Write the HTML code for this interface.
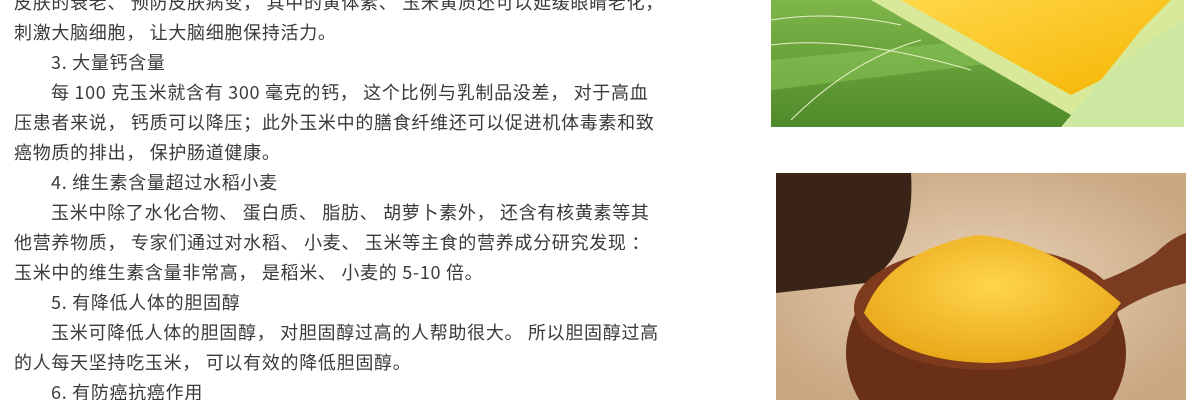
<!DOCTYPE html>
<html><head><meta charset="utf-8"><style>
html,body{margin:0;padding:0;background:#fff;width:1198px;height:400px;overflow:hidden;position:relative}
.t{position:absolute;left:14px;top:-13px;width:740px;height:413px;overflow:hidden;font-family:"Noto Sans CJK SC","Liberation Sans",sans-serif;font-size:18px;letter-spacing:0.7px;line-height:30px;color:#3a3a3a;white-space:nowrap}
.t div{height:30px}
.i{padding-left:37px}
svg{position:absolute}
</style></head><body>
<div class="t">
<div>皮肤的衰老、 预防皮肤病变， 其中的黄体素、 玉米黄质还可以延缓眼睛老化，</div>
<div>刺激大脑细胞， 让大脑细胞保持活力。</div>
<div class="i">3. 大量钙含量</div>
<div class="i">每 100 克玉米就含有 300 毫克的钙， 这个比例与乳制品没差， 对于高血</div>
<div>压患者来说， 钙质可以降压；此外玉米中的膳食纤维还可以促进机体毒素和致</div>
<div>癌物质的排出， 保护肠道健康。</div>
<div class="i">4. 维生素含量超过水稻小麦</div>
<div class="i">玉米中除了水化合物、 蛋白质、 脂肪、 胡萝卜素外， 还含有核黄素等其</div>
<div>他营养物质， 专家们通过对水稻、 小麦、 玉米等主食的营养成分研究发现 ：</div>
<div>玉米中的维生素含量非常高， 是稻米、 小麦的 5-10 倍。</div>
<div class="i">5. 有降低人体的胆固醇</div>
<div class="i">玉米可降低人体的胆固醇， 对胆固醇过高的人帮助很大。 所以胆固醇过高</div>
<div>的人每天坚持吃玉米， 可以有效的降低胆固醇。</div>
<div class="i">6. 有防癌抗癌作用</div>
</div>
<svg style="left:771px;top:0" width="413" height="127" viewBox="0 0 413 127">
<defs><linearGradient id="g1" x1="0" y1="0" x2="0" y2="1"><stop offset="0" stop-color="#7fb64a"/><stop offset="1" stop-color="#4f8a2a"/></linearGradient>
<linearGradient id="k" x1="0" y1="0" x2="1" y2="1"><stop offset="0" stop-color="#ffd84a"/><stop offset="1" stop-color="#f5b400"/></linearGradient></defs>
<rect width="413" height="127" fill="url(#g1)"/>
<path d="M0 60 L413 20 L413 40 L0 90Z" fill="#8cc75a" opacity=".5"/>
<path d="M100 0 L413 0 L413 40 L340 100 L300 115 Z" fill="#d8ea9a"/>
<path d="M130 0 L400 0 L370 30 L330 80 L300 95 Z" fill="url(#k)"/>
<path d="M290 127 L330 80 L380 40 L413 20 L413 127Z" fill="#cde8a0"/>
<path d="M0 20 Q60 10 130 25 M0 45 Q80 35 200 70 M20 120 Q80 60 150 40" stroke="#e8f0c8" stroke-width="1" fill="none"/>
</svg>
<svg style="left:776px;top:173px" width="410" height="227" viewBox="0 0 410 227">
<defs><radialGradient id="b" cx=".5" cy=".5" r=".6"><stop offset="0" stop-color="#e9d3b8"/><stop offset="1" stop-color="#c9a882"/></radialGradient>
<radialGradient id="m" cx=".5" cy=".4" r=".6"><stop offset="0" stop-color="#ffd54a"/><stop offset="1" stop-color="#e9a81a"/></radialGradient></defs>
<rect width="410" height="227" fill="url(#b)"/>
<path d="M0 0 L135 0 Q140 80 90 110 L0 120Z" fill="#3a2418"/>
<path d="M320 110 Q360 95 380 80 Q395 65 410 60 L410 110 Q370 120 340 140Z" fill="#7a3c20"/>
<ellipse cx="210" cy="180" rx="140" ry="110" fill="#6a2f17"/>
<ellipse cx="210" cy="135" rx="132" ry="62" fill="#7d3a1c"/>
<path d="M88 140 Q110 80 200 62 Q270 65 345 130 Q300 190 210 190 Q120 188 88 140Z" fill="url(#m)"/>
</svg>
</body></html>
